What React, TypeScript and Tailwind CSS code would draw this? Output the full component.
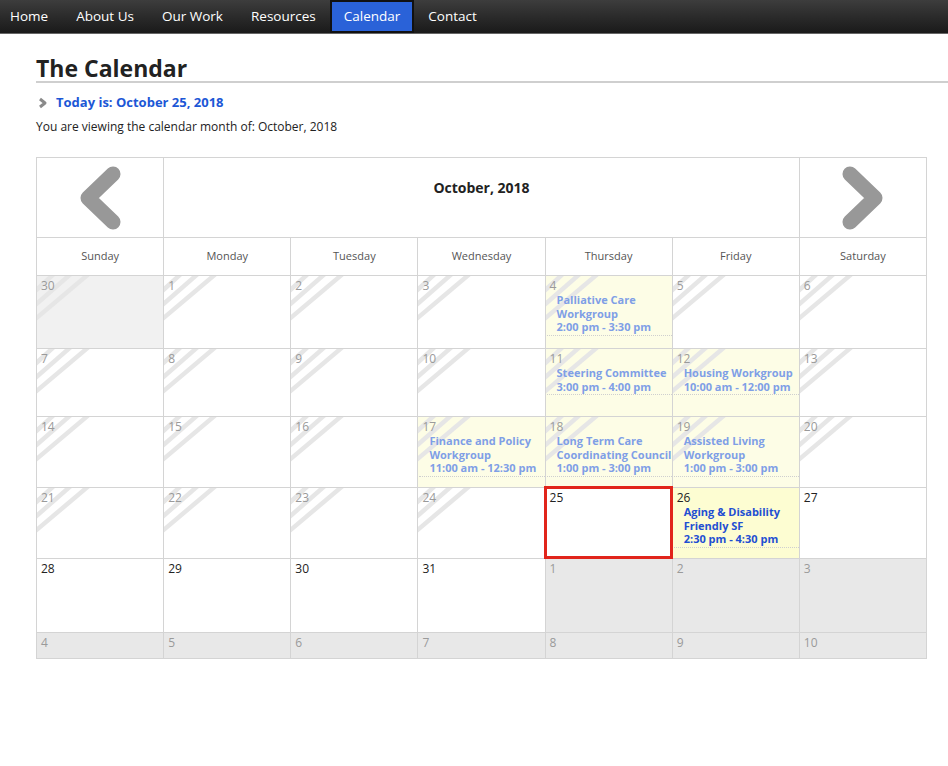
type Ev = { lines: string[]; time: string };
type Cell = {
  day: number;
  kind: "prev" | "past" | "today" | "future" | "next";
  events?: Ev[];
};

const navItems = ["Home", "About Us", "Our Work", "Resources", "Calendar", "Contact"];
const dayNames = ["Sunday", "Monday", "Tuesday", "Wednesday", "Thursday", "Friday", "Saturday"];

const p = (day: number, events?: Ev[]): Cell => ({ day, kind: "past", events });

const weeks: { h: string; cells: Cell[] }[] = [
  {
    h: "h-[73px]",
    cells: [
      { day: 30, kind: "prev" },
      p(1),
      p(2),
      p(3),
      p(4, [{ lines: ["Palliative Care", "Workgroup"], time: "2:00 pm - 3:30 pm" }]),
      p(5),
      p(6),
    ],
  },
  {
    h: "h-[68px]",
    cells: [
      p(7),
      p(8),
      p(9),
      p(10),
      p(11, [{ lines: ["Steering Committee"], time: "3:00 pm - 4:00 pm" }]),
      p(12, [{ lines: ["Housing Workgroup"], time: "10:00 am - 12:00 pm" }]),
      p(13),
    ],
  },
  {
    h: "h-[71px]",
    cells: [
      p(14),
      p(15),
      p(16),
      p(17, [{ lines: ["Finance and Policy", "Workgroup"], time: "11:00 am - 12:30 pm" }]),
      p(18, [{ lines: ["Long Term Care", "Coordinating Council"], time: "1:00 pm - 3:00 pm" }]),
      p(19, [{ lines: ["Assisted Living", "Workgroup"], time: "1:00 pm - 3:00 pm" }]),
      p(20),
    ],
  },
  {
    h: "h-[71px]",
    cells: [
      p(21),
      p(22),
      p(23),
      p(24),
      { day: 25, kind: "today" },
      {
        day: 26,
        kind: "future",
        events: [{ lines: ["Aging & Disability", "Friendly SF"], time: "2:30 pm - 4:30 pm" }],
      },
      { day: 27, kind: "future" },
    ],
  },
  {
    h: "h-[74px]",
    cells: [
      { day: 28, kind: "future" },
      { day: 29, kind: "future" },
      { day: 30, kind: "future" },
      { day: 31, kind: "future" },
      { day: 1, kind: "next" },
      { day: 2, kind: "next" },
      { day: 3, kind: "next" },
    ],
  },
  {
    h: "h-[26px]",
    cells: [4, 5, 6, 7, 8, 9, 10].map((d) => ({ day: d, kind: "next" as const })),
  },
];

// diagonal stripes in the corner of days that are over
const Hatch = () => (
  <svg className="absolute left-0 top-0 pointer-events-none" width="60" height="46">
    <g stroke="#e6e6e6" strokeWidth="4.5">
      <line x1="-4" y1="17" x2="19" y2="-4" />
      <line x1="-4" y1="31" x2="36" y2="-4" />
      <line x1="-4" y1="45" x2="54" y2="-4" />
    </g>
  </svg>
);

const Chevron = ({ right }: { right?: boolean }) => (
  <svg width="46" height="66" viewBox="0 0 46 66">
    <polyline
      points={right ? "10,9 35,33 10,57" : "36,9 11,33 36,57"}
      fill="none"
      stroke="#989898"
      strokeWidth="15"
      strokeLinejoin="round"
      strokeLinecap="round"
    />
  </svg>
);

const DayCell = ({ c, h }: { c: Cell; h: string }) => {
  const past = c.kind === "past" || c.kind === "prev";
  const hasEv = !!c.events;
  let bg = "bg-white";
  if (c.kind === "prev") bg = "bg-[#f1f1f1]";
  if (c.kind === "next") bg = "bg-[#e8e8e8]";
  if (hasEv) bg = c.kind === "future" ? "bg-[#fdfdd2]" : "bg-[#fdfde6]";
  const numColor =
    c.kind === "today" || c.kind === "future" ? "text-[#222]" : "text-[#9a9a9a]";
  return (
    <div className={`relative border-r border-b border-[#d4d4d4] ${bg} ${h}`}>
      {past && <Hatch />}
      <div className={`relative pl-[4px] pt-[2px] text-[12px] leading-[15px] ${numColor}`}>
        {c.day}
      </div>
      {c.events?.map((e, i) => (
        <div
          key={i}
          className={`relative ml-[1px] pl-[10px] pb-[1px] border-b border-dotted border-[#cfcfcf] text-[11px] leading-[13.5px] font-bold ${
            c.kind === "future" ? "text-[#1f4fd2]" : "text-[#7f9fe6]"
          }`}
        >
          {e.lines.map((l) => (
            <div key={l} className="whitespace-nowrap">
              {l}
            </div>
          ))}
          <div className="whitespace-nowrap">{e.time}</div>
        </div>
      ))}
      {c.kind === "today" && (
        <div className="absolute -left-[2px] -top-[2px] -right-[1px] -bottom-[1px] border-[3px] border-[#e1251b]" />
      )}
    </div>
  );
};

export default function App() {
  return (
    <div className="w-[948px] min-h-[766px] bg-white font-['Open_Sans',sans-serif] text-[#222]">
      <nav className="h-[34px] flex bg-gradient-to-b from-[#3d3d3d] to-[#1a1a1a] border-b border-[#666]">
        <div className="flex -ml-[4px]">
          {navItems.map((n) =>
            n === "Calendar" ? (
              <div
                key={n}
                className="h-[33px] px-[12px] flex items-center bg-[#2a62d8] border-2 border-[#111] text-white text-[13.5px]"
              >
                {n}
              </div>
            ) : (
              <div key={n} className="h-[33px] px-[14px] flex items-center text-white text-[13.5px]">
                {n}
              </div>
            )
          )}
        </div>
      </nav>

      <div className="pl-[36px] pt-[22px]">
        <h1 className="text-[23px] leading-[25px] font-bold text-[#222] border-b-2 border-[#cfcfcf]">
          The Calendar
        </h1>
        <div className="mt-[10px] flex items-center gap-[8px] pl-[2px]">
          <svg width="10" height="12" viewBox="0 0 10 12">
            <polyline
              points="2,2 7,6 2,10"
              fill="none"
              stroke="#8a8a8a"
              strokeWidth="3"
              strokeLinejoin="round"
            />
          </svg>
          <span className="text-[13px] leading-[19px] font-bold text-[#1c57d6]">
            Today is: October 25, 2018
          </span>
        </div>
        <p className="mt-[6px] text-[12px] leading-[18px]">
          You are viewing the calendar month of: October, 2018
        </p>

        <div className="mt-[21px] w-[891px] grid grid-cols-7 border-l border-t border-[#d4d4d4]">
          <div className="h-[80px] border-r border-b border-[#d4d4d4] flex items-center justify-center">
            <Chevron />
          </div>
          <div className="col-span-5 h-[80px] border-r border-b border-[#d4d4d4] pt-[19px] text-center text-[14px] font-bold">
            October, 2018
          </div>
          <div className="h-[80px] border-r border-b border-[#d4d4d4] flex items-center justify-center">
            <Chevron right />
          </div>

          {dayNames.map((d) => (
            <div
              key={d}
              className="h-[38px] border-r border-b border-[#d4d4d4] flex items-center justify-center text-[11px] text-[#555]"
            >
              {d}
            </div>
          ))}

          {weeks.map((w, wi) =>
            w.cells.map((c, ci) => <DayCell key={`${wi}-${ci}`} c={c} h={w.h} />)
          )}
        </div>
      </div>
    </div>
  );
}
